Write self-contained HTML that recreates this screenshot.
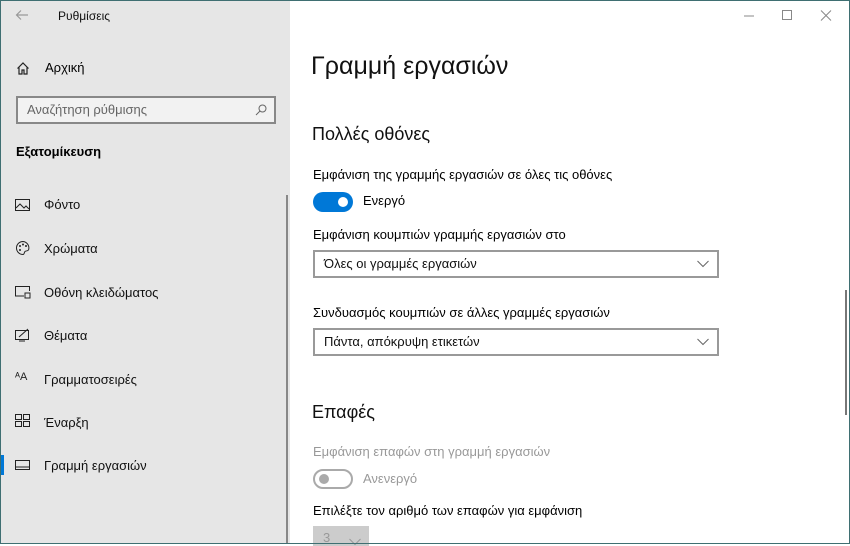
<!DOCTYPE html>
<html><head><meta charset="utf-8"><style>
*{margin:0;padding:0;box-sizing:border-box}
body{width:850px;height:544px;overflow:hidden;font-family:"Segoe UI","Liberation Sans","DejaVu Sans",sans-serif;background:#fff;position:relative;color:#000}
.side{position:absolute;left:0;top:0;width:290px;height:544px;background:#e6e6e6}
.abs{position:absolute;white-space:nowrap}
.border{position:absolute;inset:0;border:1px solid #3f6f72;pointer-events:none}
.nav{position:absolute;left:44px;font-size:13px;color:#111}
.ic{position:absolute;left:15px}
.dd{position:absolute;left:313px;width:406px;height:28px;border:2px solid #999;font-size:13px;padding:4px 9px;color:#111}
.dd svg{position:absolute;right:8px;top:8px}
</style></head><body>
<div class="side"></div>
<svg class="abs" style="left:15px;top:9px" width="14" height="12"><path d="M13 6H2M6 1.5L1.5 6 6 10.5" stroke="#999" fill="none" stroke-width="1.2"/></svg>
<div class="abs" style="left:58px;top:9px;font-size:12px;color:#111">Ρυθμίσεις</div>
<svg class="abs" style="left:16px;top:61px" width="14" height="14"><path d="M1.5 7.5L7 2l5.5 5.5M3 6.5V13h3V9h2v4h3V6.5" stroke="#222" fill="none" stroke-width="1.2"/></svg>
<div class="abs" style="left:45px;top:60px;font-size:13px">Αρχική</div>
<div class="abs" style="left:16px;top:96px;width:260px;height:28px;border:2px solid #888;background:#f2f2f2;font-size:13px;color:#666;padding:4px 9px">Αναζήτηση ρύθμισης
<svg style="position:absolute;right:7px;top:6px" width="12" height="12"><circle cx="7.5" cy="4.5" r="3.5" stroke="#666" fill="none"/><path d="M5 7L1 11" stroke="#666"/></svg></div>
<div class="abs" style="left:16px;top:144px;font-size:13px;font-weight:bold">Εξατομίκευση</div>

<svg class="ic abs" style="top:198px" width="16" height="14"><rect x="0.5" y="1.5" width="14" height="11" stroke="#222" fill="none"/><path d="M1 10l4-4 4 4 2-2 3 3" stroke="#222" fill="none"/></svg>
<div class="nav" style="top:197px">Φόντο</div>
<svg class="ic abs" style="top:240px" width="16" height="16"><path d="M8 1.5a6.5 6.5 0 1 0 0 13c1.5 0 1-2 2-3s3 0 3.7-2A6.5 6.5 0 0 0 8 1.5z" stroke="#222" fill="none"/><circle cx="5" cy="6" r="1" fill="#222"/><circle cx="8" cy="4.5" r="1" fill="#222"/><circle cx="11" cy="6" r="1" fill="#222"/><circle cx="5" cy="10" r="1" fill="#222"/></svg>
<div class="nav" style="top:241px">Χρώματα</div>
<svg class="ic abs" style="top:285px" width="16" height="14"><path d="M9 11H0.5V1.5h14V6" stroke="#222" fill="none"/><rect x="10" y="8" width="5" height="5" stroke="#222" fill="none"/></svg>
<div class="nav" style="top:285px">Οθόνη κλειδώματος</div>
<svg class="ic abs" style="top:328px" width="16" height="14"><rect x="0.5" y="2.5" width="13" height="9" stroke="#222" fill="none"/><path d="M4 9l9-8M4 13h6" stroke="#222" fill="none"/></svg>
<div class="nav" style="top:328px">Θέματα</div>
<div class="abs" style="left:15px;top:371px;font-size:11px;color:#222">ᴬA</div>
<div class="nav" style="top:372px">Γραμματοσειρές</div>
<svg class="ic abs" style="top:414px" width="16" height="14"><rect x="0.5" y="0.5" width="6" height="5" stroke="#222" fill="none"/><rect x="8.5" y="0.5" width="6" height="5" stroke="#222" fill="none"/><rect x="0.5" y="7.5" width="6" height="5" stroke="#222" fill="none"/><rect x="8.5" y="7.5" width="6" height="5" stroke="#222" fill="none"/></svg>
<div class="nav" style="top:415px">Έναρξη</div>
<div class="abs" style="left:0;top:455px;width:4px;height:20px;background:#0078d7"></div>
<svg class="ic abs" style="top:460px" width="16" height="12"><rect x="0.5" y="0.5" width="14" height="9" stroke="#222" fill="none"/><path d="M1 7h13" stroke="#222"/></svg>
<div class="nav" style="top:458px">Γραμμή εργασιών</div>
<div class="abs" style="left:286px;top:195px;width:2px;height:349px;background:#888"></div>

<svg class="abs" style="left:738px;top:10px" width="100" height="12"><path d="M6 6h10" stroke="#888"/><rect x="44.5" y="0.5" width="9" height="9" stroke="#888" fill="none"/><path d="M83 0.5l10 10M93 0.5l-10 10" stroke="#888"/></svg>

<div class="abs" style="left:311px;top:52px;font-size:25px;font-weight:300;color:#111">Γραμμή εργασιών</div>
<div class="abs" style="left:312px;top:124px;font-size:18px;color:#111">Πολλές οθόνες</div>
<div class="abs" style="left:313px;top:167px;font-size:13px">Εμφάνιση της γραμμής εργασιών σε όλες τις οθόνες</div>
<div class="abs" style="left:313px;top:192px;width:40px;height:20px;border-radius:10px;background:#0078d7"><div style="position:absolute;right:5px;top:5px;width:10px;height:10px;border-radius:5px;background:#fff"></div></div>
<div class="abs" style="left:363px;top:193px;font-size:13px">Ενεργό</div>
<div class="abs" style="left:313px;top:227px;font-size:13px">Εμφάνιση κουμπιών γραμμής εργασιών στο</div>
<div class="dd" style="top:250px">Όλες οι γραμμές εργασιών<svg width="12" height="8"><path d="M0.5 1l5.5 5.5L11.5 1" stroke="#666" fill="none"/></svg></div>
<div class="abs" style="left:313px;top:305px;font-size:13px">Συνδυασμός κουμπιών σε άλλες γραμμές εργασιών</div>
<div class="dd" style="top:328px">Πάντα, απόκρυψη ετικετών<svg width="12" height="8"><path d="M0.5 1l5.5 5.5L11.5 1" stroke="#666" fill="none"/></svg></div>
<div class="abs" style="left:312px;top:402px;font-size:18px;color:#111">Επαφές</div>
<div class="abs" style="left:313px;top:444px;font-size:13px;color:#999">Εμφάνιση επαφών στη γραμμή εργασιών</div>
<div class="abs" style="left:313px;top:469px;width:40px;height:20px;border-radius:10px;border:2px solid #aaa"><div style="position:absolute;left:4px;top:3px;width:10px;height:10px;border-radius:5px;background:#aaa"></div></div>
<div class="abs" style="left:363px;top:471px;font-size:13px;color:#999">Ανενεργό</div>
<div class="abs" style="left:313px;top:503px;font-size:13px">Επιλέξτε τον αριθμό των επαφών για εμφάνιση</div>
<div class="abs" style="left:313px;top:526px;width:56px;height:20px;background:#ccc;font-size:13px;color:#999;padding:4px 10px">3<svg style="position:absolute;left:36px;top:12px" width="12" height="8"><path d="M0.5 1l5.5 5.5L11.5 1" stroke="#999" fill="none"/></svg></div>
<div class="abs" style="left:845px;top:290px;width:2px;height:125px;background:#777"></div>
<div class="border"></div>
</body></html>
